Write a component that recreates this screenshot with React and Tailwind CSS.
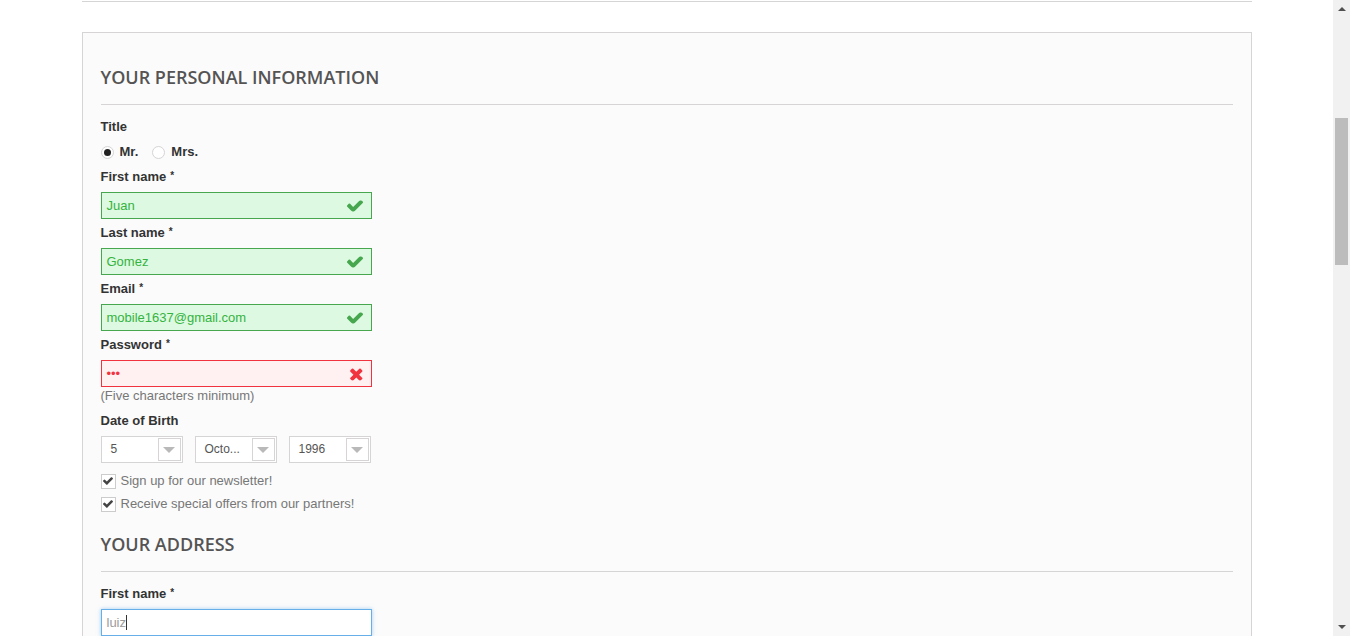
import React from "react";

const Check = () => (
  <svg width="16" height="11" viewBox="121 430 1550 1000" className="absolute right-[8px] top-1/2 -translate-y-1/2">
    <path fill="#46a74e" d="M1671 566q0 40-28 68l-724 724-136 136q-28 28-68 28t-68-28l-136-136-362-362q-28-28-28-68t28-68l136-136q28-28 68-28t68 28l294 295 656-657q28-28 68-28t68 28l136 136q28 28 28 68z" />
  </svg>
);

const Times = () => (
  <svg width="14" height="13" viewBox="250 266 1240 1260" className="absolute right-[8px] top-1/2 -translate-y-1/2">
    <path fill="#f13340" d="M1490 1322q0 40-28 68l-136 136q-28 28-68 28t-68-28l-294-294-294 294q-28 28-68 28t-68-28l-136-136q-28-28-28-68t28-68l294-294-294-294q-28-28-28-68t28-68l136-136q28-28 68-28t68 28l294 294 294-294q28-28 68-28t68 28l136 136q28 28 28 68t-28 68l-294 294 294 294q28 28 28 68z" />
  </svg>
);

const Label = ({ children, req }) => (
  <div className="h-[18px] leading-[18px] text-[13px] font-bold text-[#333]">
    {children}
    {req && <sup className="ml-[4px] text-[10px] font-bold relative -top-[2px]">*</sup>}
  </div>
);

const ValidInput = ({ value }) => (
  <div className="relative mt-[6px] w-[271px] h-[27px] border border-[#46a74e] bg-[#ddf9e1] text-[#35b33f] text-[13px] leading-[25px] pl-[5px]">
    {value}
    <Check />
  </div>
);

const Select = ({ value }) => (
  <div className="relative w-[82px] h-[27px] border border-[#d6d4d4] bg-white text-[12px] leading-[25px] pl-[9px] text-[#555]">
    {value}
    <div className="absolute right-[1px] top-[1px] w-[23px] h-[23px] border border-[#d6d4d4] bg-white flex items-center justify-center">
      <div className="w-0 h-0 border-l-[6px] border-r-[6px] border-t-[6px] border-l-transparent border-r-transparent border-t-[#b9b9b9]"></div>
    </div>
  </div>
);

const CheckBox = ({ children }) => (
  <div className="flex items-center h-[18px]">
    <div className="w-[15px] h-[15px] border border-[#ccc] bg-white flex items-center justify-center">
      <svg width="10" height="8" viewBox="121 430 1550 1000">
        <path fill="#444" d="M1671 566q0 40-28 68l-724 724-136 136q-28 28-68 28t-68-28l-136-136-362-362q-28-28-28-68t28-68l136-136q28-28 68-28t68 28l294 295 656-657q28-28 68-28t68 28l136 136q28 28 28 68z" />
      </svg>
    </div>
    <span className="ml-[5px] text-[13px] text-[#777]">{children}</span>
  </div>
);

const Heading = ({ children }) => (
  <div
    className="text-[18px] leading-[22px] font-semibold text-[#555454] uppercase pb-[16px] border-b border-[#d6d4d4]"
    style={{ fontFamily: '"Open Sans", sans-serif' }}
  >
    {children}
  </div>
);

export default function App() {
  return (
    <div className="flex w-[1350px] h-[636px] overflow-hidden bg-white" style={{ fontFamily: '"Liberation Sans", Arial, sans-serif' }}>
      <div className="w-[1333px]">
        <div className="w-[1170px] mx-auto">
          <div className="h-[2px] border-b border-[#d6d4d4]"></div>
          <div className="mt-[30px] border border-[#d6d4d4] bg-[#fbfbfb] pt-[33px] px-[18px] pb-[40px] h-[700px]">
            <Heading>Your personal information</Heading>
            <div className="mt-[13px]">
              <Label>Title</Label>
              <div className="mt-[7px] h-[18px] flex items-center text-[13px] font-bold text-[#333]">
                <div className="w-[13px] h-[13px] rounded-full border border-[#d6d4d4] bg-white flex items-center justify-center">
                  <div className="w-[7px] h-[7px] rounded-full bg-[#222]"></div>
                </div>
                <span className="ml-[6px]">Mr.</span>
                <div className="ml-[14px] w-[13px] h-[13px] rounded-full border border-[#d6d4d4] bg-white"></div>
                <span className="ml-[6px]">Mrs.</span>
              </div>
            </div>
            <div className="mt-[7px]">
              <Label req>First name</Label>
              <ValidInput value="Juan" />
            </div>
            <div className="mt-[5px]">
              <Label req>Last name</Label>
              <ValidInput value="Gomez" />
            </div>
            <div className="mt-[5px]">
              <Label req>Email</Label>
              <ValidInput value="mobile1637@gmail.com" />
            </div>
            <div className="mt-[5px]">
              <Label req>Password</Label>
              <div className="relative mt-[6px] w-[271px] h-[27px] border border-[#f13340] bg-[#fff1f2] text-[#f13340] text-[13px] leading-[25px] pl-[5px]">
                •••
                <Times />
              </div>
              <div className="h-[18px] leading-[18px] text-[13px] text-[#777]">(Five characters minimum)</div>
            </div>
            <div className="mt-[7px]">
              <Label>Date of Birth</Label>
              <div className="mt-[6px] flex gap-[12px]">
                <Select value="5" />
                <Select value="Octo..." />
                <Select value="1996" />
              </div>
            </div>
            <div className="mt-[9px] flex flex-col gap-[5px]">
              <CheckBox>Sign up for our newsletter!</CheckBox>
              <CheckBox>Receive special offers from our partners!</CheckBox>
            </div>
            <div className="mt-[20px]">
              <Heading>Your address</Heading>
            </div>
            <div className="mt-[13px]">
              <Label req>First name</Label>
              <div className="relative mt-[6px] w-[271px] h-[27px] border border-[#66afe9] shadow-[0_0_4px_rgba(102,175,233,0.6)] bg-white text-[#9c9b9b] text-[13px] leading-[25px] pl-[5px]">
                luiz<span className="inline-block w-[1px] h-[15px] bg-[#333] align-middle -mt-[2px]"></span>
              </div>
            </div>
          </div>
        </div>
      </div>
      <div className="w-[17px] h-[636px] bg-[#f1f1f1] relative">
        <div className="absolute left-[5px] top-[7px] w-0 h-0 border-l-[4px] border-r-[4px] border-b-[4px] border-l-transparent border-r-transparent border-b-[#505050]"></div>
        <div className="absolute left-[2px] top-[118px] w-[13px] h-[147px] bg-[#bcbcbc]"></div>
        <div className="absolute left-[5px] top-[625px] w-0 h-0 border-l-[4px] border-r-[4px] border-t-[4px] border-l-transparent border-r-transparent border-t-[#505050]"></div>
      </div>
    </div>
  );
}
